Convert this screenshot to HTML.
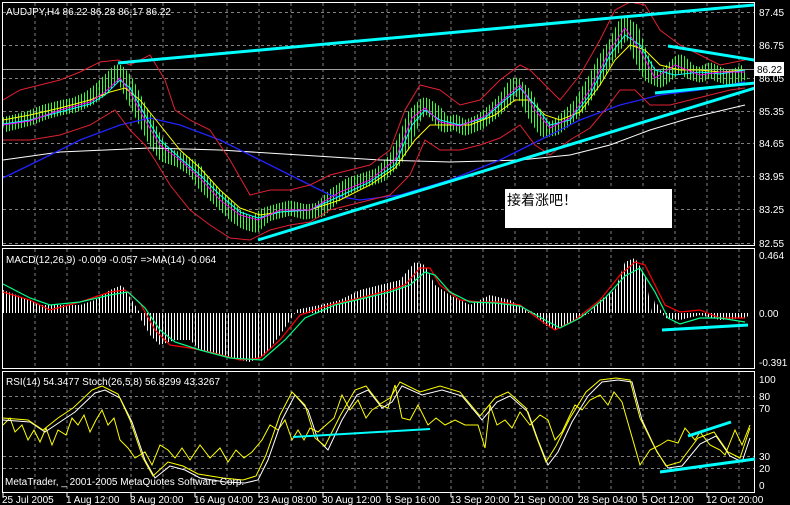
<!DOCTYPE html>
<html><head><meta charset="utf-8"><style>
html,body{margin:0;padding:0;background:#000;}
body{width:790px;height:505px;overflow:hidden;position:relative;font-family:"Liberation Sans","Noto Sans CJK SC",sans-serif;}
svg{position:absolute;left:0;top:0;}
text{font-family:"Liberation Sans","Noto Sans CJK SC",sans-serif;font-size:10px;fill:#fff;}
</style></head><body>
<svg width="790" height="505" viewBox="0 0 790 505">
<defs>
<pattern id="gs" width="3" height="10" patternUnits="userSpaceOnUse"><rect x="0" y="0" width="1" height="10" fill="#3f3"/></pattern>
<pattern id="ws" width="3" height="10" patternUnits="userSpaceOnUse"><rect x="0" y="0" width="1" height="10" fill="#fff"/></pattern>
<mask id="pm"><polyline fill="none" stroke="#fff" stroke-width="15" stroke-linejoin="round" points="3,125 15,122 30,118 45,112 60,108 75,105 90,98 100,90 110,80 118,72 125,80 135,100 145,120 155,140 165,155 180,160 195,170 205,185 215,195 225,205 235,215 245,222 255,225 265,215 275,212 290,208 305,212 320,210 335,195 350,185 365,180 380,175 395,160 405,140 415,115 425,105 435,112 445,125 455,122 465,128 480,122 495,110 505,100 515,85 525,95 535,115 545,130 555,128 565,120 580,105 595,80 605,60 615,45 625,25 632,30 640,55 650,75 660,80 670,72 680,62 690,72 700,75 710,70 720,75 730,78 745,72"/></mask>
<clipPath id="c1"><rect x="3" y="3" width="751" height="242"/></clipPath>
</defs>
<rect x="2.5" y="2.5" width="752" height="243" fill="none" stroke="#fff"/>
<rect x="2.5" y="248.5" width="752" height="120" fill="none" stroke="#fff"/>
<rect x="2.5" y="371.5" width="752" height="121" fill="none" stroke="#fff"/>
<g stroke="#808080" stroke-dasharray="3,3" stroke-width="1">
<path d="M35 3V245M67 3V245M99 3V245M131 3V245M163 3V245M195 3V245M227 3V245M259 3V245M291 3V245M323 3V245M355 3V245M387 3V245M419 3V245M451 3V245M483 3V245M515 3V245M547 3V245M579 3V245M611 3V245M643 3V245M675 3V245M707 3V245M739 3V245"/>
<path d="M35 249V368M67 249V368M99 249V368M131 249V368M163 249V368M195 249V368M227 249V368M259 249V368M291 249V368M323 249V368M355 249V368M387 249V368M419 249V368M451 249V368M483 249V368M515 249V368M547 249V368M579 249V368M611 249V368M643 249V368M675 249V368M707 249V368M739 249V368"/>
<path d="M35 372V492M67 372V492M99 372V492M131 372V492M163 372V492M195 372V492M227 372V492M259 372V492M291 372V492M323 372V492M355 372V492M387 372V492M419 372V492M451 372V492M483 372V492M515 372V492M547 372V492M579 372V492M611 372V492M643 372V492M675 372V492M707 372V492M739 372V492"/>
<path d="M3 12.5H754M3 45.5H754M3 78.5H754M3 111.5H754M3 143.5H754M3 176.5H754M3 209.5H754M3 243.5H754"/>
<path d="M3 396.5H754M3 408.5H754M3 456.5H754M3 468.5H754"/>
</g>
<line x1="3" y1="69.5" x2="754" y2="69.5" stroke="#a0a0a0"/>
<g clip-path="url(#c1)">
<rect x="3" y="3" width="751" height="242" fill="url(#gs)" mask="url(#pm)"/>
<polyline fill="none" stroke="#fff" points="3,160 60,152 150,148 220,150 300,155 380,160 450,162 520,160 570,155 610,145 650,130 690,118 745,105"/>
<polyline fill="none" stroke="#22f" stroke-width="1.3" points="3,178 40,160 80,140 120,125 150,118 180,125 220,140 260,160 300,180 330,195 360,200 400,195 450,180 500,160 540,140 580,120 620,105 660,95 700,90 745,82"/>
<polyline fill="none" stroke="#e02030" points="3,100 20,90 40,85 60,80 80,72 100,62 118,60 130,65 150,55 165,80 175,110 190,120 210,130 230,160 250,195 270,190 290,190 310,185 330,175 350,170 370,165 390,150 405,110 420,85 440,90 460,105 480,100 500,80 520,65 530,70 545,85 560,100 580,75 600,40 615,10 630,2 645,5 660,30 680,45 700,55 720,65 745,60"/>
<polyline fill="none" stroke="#e02030" points="3,140 30,140 60,135 90,125 115,110 130,130 145,145 155,160 170,185 190,210 210,225 230,238 250,240 270,230 290,225 310,222 330,210 350,205 370,200 390,195 410,175 425,140 440,150 460,150 480,145 500,138 520,125 535,145 550,155 570,140 590,128 605,110 620,90 635,90 650,105 670,105 690,100 710,95 730,90 745,88"/>
<polyline fill="none" stroke="#ff0" points="3,120 30,115 60,108 90,100 110,92 125,88 140,100 160,125 180,150 200,168 220,190 240,208 260,215 280,212 310,210 340,200 370,185 395,168 415,140 430,125 450,125 470,125 495,115 515,100 530,100 545,115 560,120 580,112 600,85 615,60 630,45 645,50 660,65 680,70 700,70 720,72 745,70"/>
<polyline fill="none" stroke="#0ff" points="3,124 30,120 60,112 90,104 105,95 120,80 130,88 145,115 160,140 180,158 200,175 220,195 240,212 258,218 280,212 310,210 340,196 370,182 395,165 412,125 425,110 440,120 460,125 485,118 505,100 520,88 535,105 550,125 570,120 590,95 610,55 625,35 640,45 655,70 675,75 700,72 720,74 745,70"/>
<polyline fill="none" stroke="#f0f" points="3,125 30,121 60,110 90,102 105,92 120,78 130,92 145,120 160,145 180,160 200,178 220,200 240,215 258,220 280,210 310,210 340,192 370,180 395,160 412,118 425,108 440,122 460,126 485,116 505,98 520,85 535,110 550,128 570,118 590,90 610,50 625,28 640,50 655,78 675,65 700,75 720,72 745,72"/>
<g stroke="#0ff" stroke-width="3" fill="none">
<line x1="118" y1="63" x2="754" y2="5"/>
<line x1="258" y1="240" x2="765" y2="85"/>
<line x1="668" y1="46" x2="760" y2="61"/>
<line x1="655" y1="93" x2="765" y2="82"/>
</g>
</g>
<rect x="505" y="189" width="167" height="39" fill="#fff"/>
<text x="507" y="205" style="fill:#000;font-size:14px">接着涨吧！</text>
<text x="6" y="15">AUDJPY,H4  86.22 86.28 86.17 86.22</text>
<polygon fill="url(#ws)" points="3,313 3,290 30,300 40,305 60,305 80,305 95,300 110,290 122,285 135,305 140,313 140,318 150,335 160,345 175,340 190,340 200,350 230,358 250,362 265,355 280,335 295,313 295,310 320,305 340,300 360,290 380,285 400,280 415,262 425,265 435,285 450,295 470,305 490,295 510,300 530,313 530,310 545,325 555,330 575,320 590,313 600,300 615,290 625,262 635,258 645,275 652,313 655,300 665,318 680,320 700,315 720,320 745,318 750,315 750,313"/>
<polyline fill="none" stroke="#f00" stroke-width="1.2" points="3,292 30,300 50,310 80,302 110,292 125,290 140,303 155,330 170,345 190,348 210,352 240,360 260,358 280,340 300,315 330,305 360,298 390,290 405,285 420,268 430,268 440,285 460,300 480,302 500,302 520,305 540,320 555,330 575,320 600,300 620,275 635,262 645,265 655,285 665,305 680,312 700,310 720,318 745,318"/>
<polyline fill="none" stroke="#0f8" stroke-width="1.2" points="3,284 30,298 50,305 80,302 110,295 128,292 145,308 160,330 175,342 200,350 230,358 262,360 285,340 305,318 335,305 365,298 390,292 410,285 425,272 435,275 450,292 470,302 495,303 520,306 545,320 560,328 580,318 605,298 625,276 640,268 655,292 668,318 680,324 700,318 720,318 745,322"/>
<line x1="662" y1="330" x2="748" y2="325" stroke="#0ff" stroke-width="3"/>
<text x="6" y="263">MACD(12,26,9) -0.009 -0.057  =&gt;MA(14) -0.064</text>
<polyline fill="none" stroke="#ff0" points="3,425 10,418 15,432 22,425 28,440 34,430 40,442 46,428 52,445 58,430 66,435 72,418 78,425 84,415 90,432 96,420 102,410 108,425 114,418 120,440 128,448 135,458 140,455 145,452 152,465 160,445 168,450 175,458 182,448 190,460 200,445 210,458 220,448 228,462 236,450 244,458 252,452 262,440 270,425 278,430 285,420 292,440 298,430 304,440 310,428 318,432 326,425 334,418 342,395 350,410 358,400 366,418 372,410 380,405 388,408 395,385 402,418 410,420 418,405 428,425 436,418 445,425 455,420 465,425 478,425 485,448 490,405 497,425 505,420 512,428 520,412 530,425 540,415 548,420 555,440 562,432 570,415 575,405 582,410 590,400 600,395 608,405 614,392 622,402 630,430 640,465 650,450 660,445 668,440 678,443 685,428 695,440 700,432 710,445 720,450 725,455 735,430 742,445 750,425"/>
<polyline fill="none" stroke="#fff" points="3,420 30,422 45,432 60,422 75,412 95,393 105,390 120,398 132,422 145,460 155,478 170,466 185,470 200,478 225,482 245,483 258,480 268,460 282,420 295,395 308,410 318,440 328,450 342,420 357,395 368,390 382,408 392,402 402,386 422,395 442,390 462,396 482,420 497,402 510,396 528,412 538,440 548,465 558,452 572,422 588,396 602,382 618,380 632,382 642,420 657,452 668,468 682,466 700,444 716,436 730,456 742,462 750,438"/>
<polyline fill="none" stroke="#ff0" points="3,418 28,420 43,430 58,418 73,408 92,390 102,386 118,394 130,420 143,458 153,476 168,462 183,466 198,474 223,478 243,480 256,476 266,455 280,415 292,392 305,405 315,438 325,446 340,416 355,390 366,386 380,404 390,398 400,382 420,392 440,386 460,392 480,416 495,398 508,392 526,408 536,436 546,462 556,446 570,418 586,392 600,380 616,378 630,380 640,418 655,448 666,466 680,462 698,438 714,432 728,452 740,458 750,428"/>
<line x1="293" y1="437" x2="430" y2="429" stroke="#0ff" stroke-width="2"/>
<g stroke="#0ff" stroke-width="3">
<line x1="688" y1="436" x2="731" y2="422"/>
<line x1="660" y1="472" x2="755" y2="459"/>
</g>
<text x="6" y="385">RSI(14) 54.3477  Stoch(26,5,8) 56.8299 43.3267</text>
<text x="5" y="485">MetaTrader, _ 2001-2005 MetaQuotes Software Corp.</text>
<g>
<text x="759" y="16">87.45</text><text x="759" y="49">86.75</text><text x="759" y="82">86.05</text>
<text x="759" y="115">85.35</text><text x="759" y="147">84.65</text><text x="759" y="180">83.95</text>
<text x="759" y="213">83.25</text><text x="759" y="247">82.55</text>
<text x="759" y="259">0.464</text><text x="759" y="317">0.00</text><text x="759" y="366">-0.391</text>
<text x="759" y="383">100</text><text x="759" y="400">80</text><text x="759" y="412">70</text>
<text x="759" y="460">30</text><text x="759" y="472">20</text><text x="759" y="489">0</text>
</g>
<rect x="755" y="62" width="29" height="14" fill="#fff"/>
<text x="757" y="73" style="fill:#000">86.22</text>
<g>
<text x="2" y="503">25 Jul 2005</text><text x="66" y="503">1 Aug 12:00</text><text x="130" y="503">8 Aug 20:00</text>
<text x="194" y="503">16 Aug 04:00</text><text x="258" y="503">23 Aug 08:00</text><text x="322" y="503">30 Aug 12:00</text>
<text x="386" y="503">6 Sep 16:00</text><text x="450" y="503">13 Sep 20:00</text><text x="514" y="503">21 Sep 00:00</text>
<text x="578" y="503">28 Sep 04:00</text><text x="642" y="503">5 Oct 12:00</text><text x="706" y="503">12 Oct 20:00</text>
</g>
<path d="M3 493V497M67 493V497M131 493V497M195 493V497M259 493V497M323 493V497M387 493V497M451 493V497M515 493V497M579 493V497M643 493V497M707 493V497" stroke="#fff"/>
</svg>
</body></html>
